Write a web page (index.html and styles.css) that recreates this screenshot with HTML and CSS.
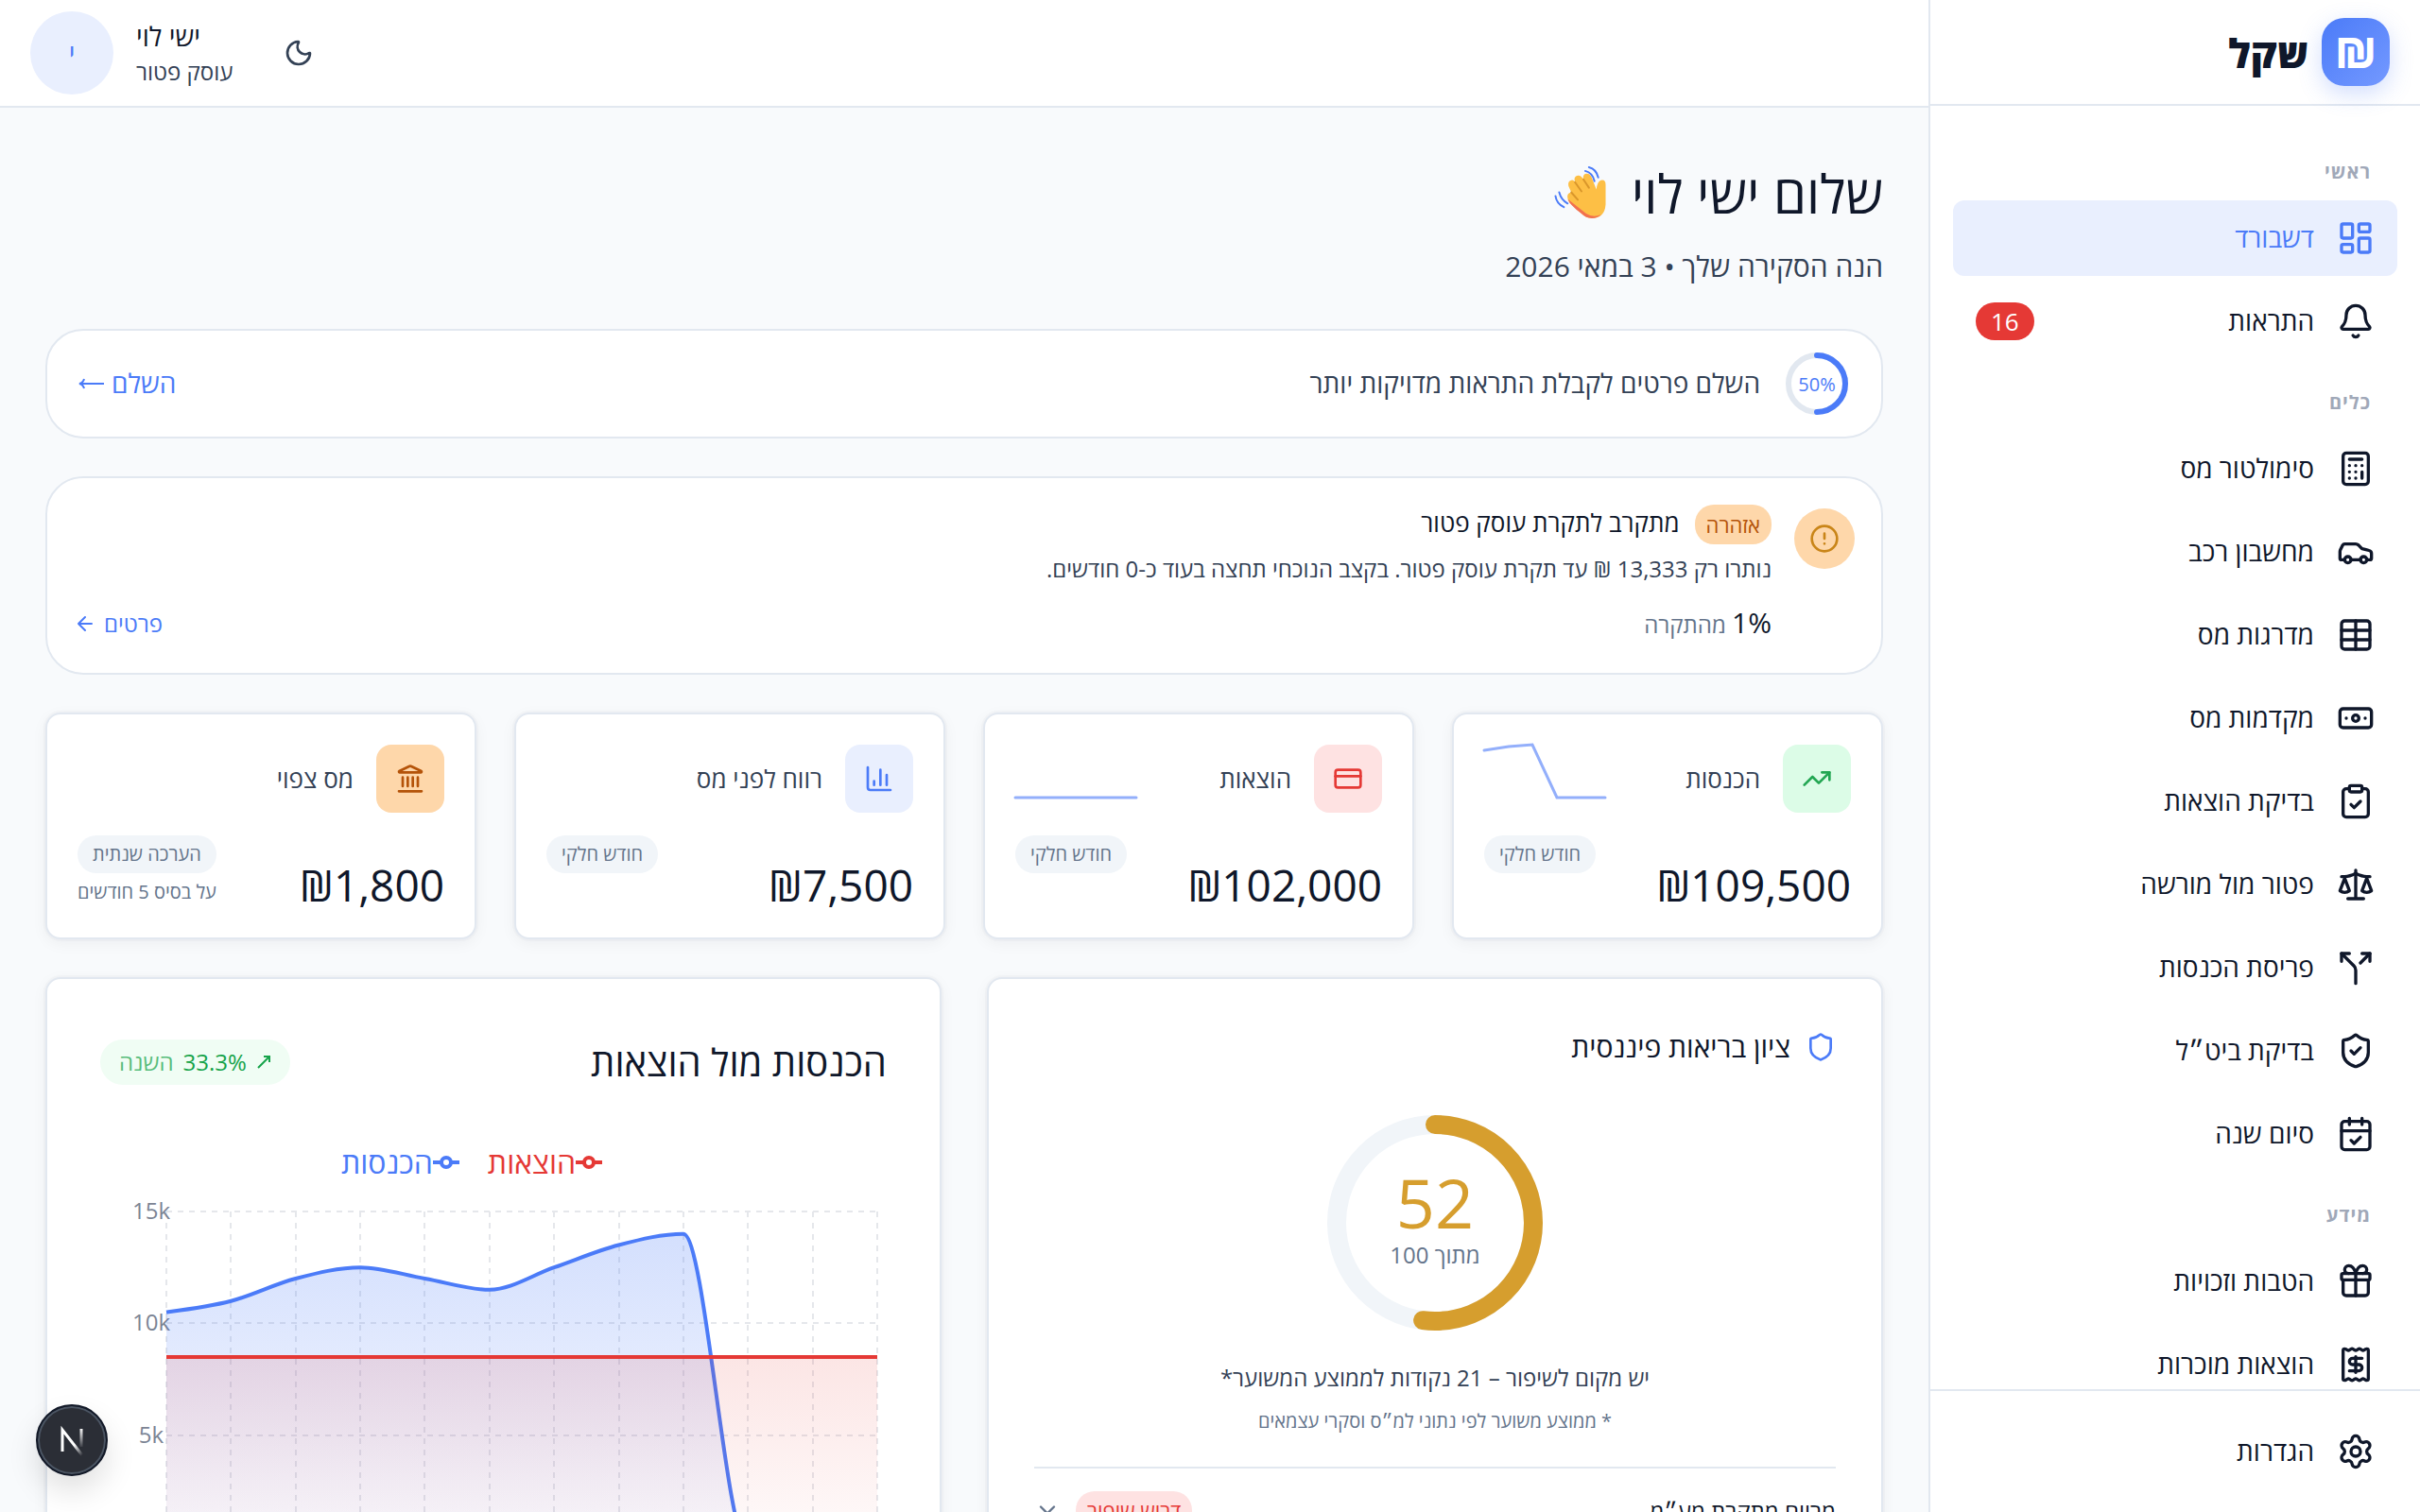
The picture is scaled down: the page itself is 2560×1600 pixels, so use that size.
FILE: index.html
```html
<!DOCTYPE html>
<html lang="he" dir="rtl">
<head>
  <meta charset="UTF-8">
  <meta name="viewport" content="width=device-width, initial-scale=1.0">
  <title>שקל - דשבורד</title>
  <link rel="stylesheet" href="styles.css">
</head>
<body>

  <aside class="sidebar">
    <div class="brand">
      <span class="brand-icon">₪</span>
      <span class="brand-name">שקל</span>
    </div>

    <nav class="nav">
      <h2 class="nav-title">ראשי</h2>
      <a href="#" class="nav-item active">
        <svg class="icon" viewBox="0 0 24 24"><rect x="3" y="3" width="7" height="9" rx="1"/><rect x="14" y="3" width="7" height="5" rx="1"/><rect x="14" y="12" width="7" height="9" rx="1"/><rect x="3" y="16" width="7" height="5" rx="1"/></svg>
        <span>דשבורד</span>
      </a>
      <a href="#" class="nav-item">
        <svg class="icon" viewBox="0 0 24 24"><path d="M10.268 21a2 2 0 0 0 3.464 0"/><path d="M3.262 15.326A1 1 0 0 0 4 17h16a1 1 0 0 0 .74-1.673C19.41 13.956 18 12.499 18 8A6 6 0 0 0 6 8c0 4.499-1.411 5.956-2.738 7.326"/></svg>
        <span>התראות</span>
        <span class="nav-count">16</span>
      </a>

      <h2 class="nav-title">כלים</h2>
      <a href="#" class="nav-item">
        <svg class="icon" viewBox="0 0 24 24"><rect x="4" y="2" width="16" height="20" rx="2"/><path d="M8 6h8M16 14v4M16 10h.01M12 10h.01M8 10h.01M12 14h.01M8 14h.01M12 18h.01M8 18h.01"/></svg>
        <span>סימולטור מס</span>
      </a>
      <a href="#" class="nav-item">
        <svg class="icon" viewBox="0 0 24 24"><path d="M19 17h2c.6 0 1-.4 1-1v-3c0-.9-.7-1.7-1.5-1.9C18.7 10.6 16 10 16 10s-1.3-1.4-2.2-2.3c-.5-.4-1.1-.7-1.8-.7H5c-.6 0-1.1.4-1.4.9l-1.4 2.9A3.7 3.7 0 0 0 2 12v4c0 .6.4 1 1 1h2"/><circle cx="7" cy="17" r="2"/><path d="M9 17h6"/><circle cx="17" cy="17" r="2"/></svg>
        <span>מחשבון רכב</span>
      </a>
      <a href="#" class="nav-item">
        <svg class="icon" viewBox="0 0 24 24"><path d="M12 3v18"/><rect x="3" y="3" width="18" height="18" rx="2"/><path d="M3 9h18M3 15h18"/></svg>
        <span>מדרגות מס</span>
      </a>
      <a href="#" class="nav-item">
        <svg class="icon" viewBox="0 0 24 24"><rect x="2" y="6" width="20" height="12" rx="2"/><circle cx="12" cy="12" r="2"/><path d="M6 12h.01M18 12h.01"/></svg>
        <span>מקדמות מס</span>
      </a>
      <a href="#" class="nav-item">
        <svg class="icon" viewBox="0 0 24 24"><rect x="8" y="2" width="8" height="4" rx="1"/><path d="M16 4h2a2 2 0 0 1 2 2v14a2 2 0 0 1-2 2H6a2 2 0 0 1-2-2V6a2 2 0 0 1 2-2h2"/><path d="m9 14 2 2 4-4"/></svg>
        <span>בדיקת הוצאות</span>
      </a>
      <a href="#" class="nav-item">
        <svg class="icon" viewBox="0 0 24 24"><path d="m16 16 3-8 3 8c-.87.65-1.92 1-3 1s-2.13-.35-3-1Z"/><path d="m2 16 3-8 3 8c-.87.65-1.92 1-3 1s-2.13-.35-3-1Z"/><path d="M7 21h10M12 3v18"/><path d="M3 7h2c2 0 5-1 7-2 2 1 5 2 7 2h2"/></svg>
        <span>פטור מול מורשה</span>
      </a>
      <a href="#" class="nav-item">
        <svg class="icon" viewBox="0 0 24 24"><path d="M16 3h5v5M8 3H3v5"/><path d="M12 22v-8.3a4 4 0 0 0-1.172-2.872L3 3"/><path d="m15 9 6-6"/></svg>
        <span>פריסת הכנסות</span>
      </a>
      <a href="#" class="nav-item">
        <svg class="icon" viewBox="0 0 24 24"><path d="M20 13c0 5-3.5 7.5-7.66 8.95a1 1 0 0 1-.67-.01C7.5 20.5 4 18 4 13V6a1 1 0 0 1 1-1c2 0 4.5-1.2 6.24-2.72a1.17 1.17 0 0 1 1.52 0C14.51 3.81 17 5 19 5a1 1 0 0 1 1 1z"/><path d="m9 12 2 2 4-4"/></svg>
        <span>בדיקת ביט״ל</span>
      </a>
      <a href="#" class="nav-item">
        <svg class="icon" viewBox="0 0 24 24"><path d="M8 2v4M16 2v4"/><rect x="3" y="4" width="18" height="18" rx="2"/><path d="M3 10h18"/><path d="m9 16 2 2 4-4"/></svg>
        <span>סיום שנה</span>
      </a>

      <h2 class="nav-title">מידע</h2>
      <a href="#" class="nav-item">
        <svg class="icon" viewBox="0 0 24 24"><path d="M12 7v14"/><path d="M20 11v8a2 2 0 0 1-2 2H6a2 2 0 0 1-2-2v-8"/><path d="M7.5 7a1 1 0 0 1 0-5A4.8 8 0 0 1 12 7a4.8 8 0 0 1 4.5-5 1 1 0 0 1 0 5"/><rect x="3" y="7" width="18" height="4" rx="1"/></svg>
        <span>הטבות וזכויות</span>
      </a>
      <a href="#" class="nav-item">
        <svg class="icon" viewBox="0 0 24 24"><path d="M4 3a1 1 0 0 1 1-1 1.3 1.3 0 0 1 .7.2l.933.6a1.3 1.3 0 0 0 1.4 0l.934-.6a1.3 1.3 0 0 1 1.4 0l.933.6a1.3 1.3 0 0 0 1.4 0l.933-.6a1.3 1.3 0 0 1 1.4 0l.934.6a1.3 1.3 0 0 0 1.4 0l.933-.6A1.3 1.3 0 0 1 19 2a1 1 0 0 1 1 1v18a1 1 0 0 1-1 1 1.3 1.3 0 0 1-.7-.2l-.933-.6a1.3 1.3 0 0 0-1.4 0l-.934.6a1.3 1.3 0 0 1-1.4 0l-.933-.6a1.3 1.3 0 0 0-1.4 0l-.933.6a1.3 1.3 0 0 1-1.4 0l-.934-.6a1.3 1.3 0 0 0-1.4 0l-.933.6a1.3 1.3 0 0 1-.7.2 1 1 0 0 1-1-1z"/><path d="M12 17V7"/><path d="M16 8h-6a2 2 0 0 0 0 4h4a2 2 0 0 1 0 4H8"/></svg>
        <span>הוצאות מוכרות</span>
      </a>
    </nav>

    <div class="sidebar-footer">
      <a href="#" class="nav-item">
        <svg class="icon" viewBox="0 0 24 24"><path d="M9.671 4.136a2.34 2.34 0 0 1 4.659 0 2.34 2.34 0 0 0 3.319 1.915 2.34 2.34 0 0 1 2.33 4.033 2.34 2.34 0 0 0 0 3.831 2.34 2.34 0 0 1-2.33 4.033 2.34 2.34 0 0 0-3.319 1.915 2.34 2.34 0 0 1-4.659 0 2.34 2.34 0 0 0-3.32-1.915 2.34 2.34 0 0 1-2.33-4.033 2.34 2.34 0 0 0 0-3.831A2.34 2.34 0 0 1 6.35 6.051a2.34 2.34 0 0 0 3.319-1.915"/><circle cx="12" cy="12" r="3"/></svg>
        <span>הגדרות</span>
      </a>
    </div>
  </aside>

  <div class="page">
    <header class="topbar">
      <button type="button" class="theme-btn" aria-label="מצב כהה">
        <svg class="icon icon-sm" viewBox="0 0 24 24"><path d="M20.985 12.486a9 9 0 1 1-9.473-9.472c.405-.022.617.46.402.803a6 6 0 0 0 8.268 8.268c.344-.215.825-.004.803.401"/></svg>
      </button>
      <div class="user">
        <span class="user-name">ישי לוי</span>
        <span class="user-type">עוסק פטור</span>
      </div>
      <span class="avatar">י</span>
    </header>

    <main class="content">
      <div class="welcome">
        <h1>
          שלום ישי לוי
          <svg class="wave" viewBox="0 0 56 57" role="img" aria-label="יד מנופפת">
            <path d="M14 34 Q13 29 18 28 L15 21 Q14 16 18 15 Q20 14 22 17 Q20 11 25 10 Q28 9 31 14 Q30 8 35 8 Q38 8 40 12 L45 25 Q46 16 50 15 Q55 14 55 20 V41 Q54 56 40 56 Q34 56 29 51 L16 39 Z" fill="#fdbf45"/>
            <path d="M14 35 Q16 41 29 51 Q34 56 40 56 Q46 56 50 52 Q42 56 34 51 Z" fill="#f2704f"/>
            <path d="M22 17 L29 27M31 14 L37 23M18 28 L25 36" fill="none" stroke="#d9962b" stroke-width="2" stroke-linecap="round"/>
            <path d="M37 1 Q45 3 47 12M33 5 Q41 7 43 16M1 32 Q2 40 10 44M5 28 Q7 36 14 40" fill="none" stroke="#4b7bf8" stroke-width="2" stroke-linecap="round"/>
          </svg>
        </h1>
        <p>הנה הסקירה שלך • 3 במאי 2026</p>
      </div>

      <section class="panel complete">
        <div class="complete-ring">
          <svg viewBox="0 0 72 72">
            <circle cx="36" cy="36" r="30" stroke="#e2e8f0"/>
            <circle cx="36" cy="36" r="30" stroke="#4b7bf8" pathLength="100" stroke-dasharray="50 100" stroke-linecap="round"/>
          </svg>
          <span dir="ltr">50%</span>
        </div>
        <p>השלם פרטים לקבלת התראות מדויקות יותר</p>
        <a href="#">השלם
          <svg class="long-arrow" viewBox="0 0 28 16"><path d="M28 9H2M7 4Q6 8 2 9Q6 10 7 14"/></svg>
        </a>
      </section>

      <section class="panel alert">
        <span class="alert-icon">
          <svg class="icon icon-sm" viewBox="0 0 24 24"><circle cx="12" cy="12" r="10"/><path d="M12 8v4M12 16h.01"/></svg>
        </span>
        <div class="alert-body">
          <div class="alert-head">
            <span class="alert-tag">אזהרה</span>
            <h3>מתקרב לתקרת עוסק פטור</h3>
          </div>
          <p>נותרו רק 13,333 ₪ עד תקרת עוסק פטור. בקצב הנוכחי תחצה בעוד כ-0 חודשים.</p>
          <div class="alert-foot">
            <span><b dir="ltr">1%</b> מהתקרה</span>
            <a href="#">פרטים
              <svg class="icon icon-xs" viewBox="0 0 24 24"><path d="m12 19-7-7 7-7M19 12H5"/></svg>
            </a>
          </div>
        </div>
      </section>

      <section class="stats">
        <article class="card stat">
          <div class="stat-top">
            <span class="stat-icon green">
              <svg class="icon icon-sm" viewBox="0 0 24 24"><path d="M16 7h6v6"/><path d="m22 7-8.5 8.5-5-5L2 17"/></svg>
            </span>
            <h3>הכנסות</h3>
            <svg class="spark" viewBox="0 0 128 56"><polyline points="0,6 26,2 51,0 77,56 102,56 128,56"/></svg>
          </div>
          <div class="stat-bottom">
            <strong dir="ltr">₪109,500</strong>
            <div class="stat-notes"><span class="tag">חודש חלקי</span></div>
          </div>
        </article>

        <article class="card stat">
          <div class="stat-top">
            <span class="stat-icon red">
              <svg class="icon icon-sm" viewBox="0 0 24 24"><rect x="2" y="5" width="20" height="14" rx="2"/><path d="M2 10h20"/></svg>
            </span>
            <h3>הוצאות</h3>
            <svg class="spark" viewBox="0 0 128 56"><polyline points="0,56 128,56"/></svg>
          </div>
          <div class="stat-bottom">
            <strong dir="ltr">₪102,000</strong>
            <div class="stat-notes"><span class="tag">חודש חלקי</span></div>
          </div>
        </article>

        <article class="card stat">
          <div class="stat-top">
            <span class="stat-icon blue">
              <svg class="icon icon-sm" viewBox="0 0 24 24"><path d="M3 3v16a2 2 0 0 0 2 2h16"/><path d="M18 17V9M13 17V5M8 17v-3"/></svg>
            </span>
            <h3>רווח לפני מס</h3>
          </div>
          <div class="stat-bottom">
            <strong dir="ltr">₪7,500</strong>
            <div class="stat-notes"><span class="tag">חודש חלקי</span></div>
          </div>
        </article>

        <article class="card stat">
          <div class="stat-top">
            <span class="stat-icon orange">
              <svg class="icon icon-sm" viewBox="0 0 24 24"><path d="M10 18v-7M14 18v-7M18 18v-7M6 18v-7M3 22h18"/><path d="M11.119 2.205a2 2 0 0 1 1.762 0l7.84 3.846A.5.5 0 0 1 20.5 7h-17a.5.5 0 0 1-.22-.949z"/></svg>
            </span>
            <h3>מס צפוי</h3>
          </div>
          <div class="stat-bottom">
            <strong dir="ltr">₪1,800</strong>
            <div class="stat-notes">
              <span class="tag">הערכה שנתית</span>
              <small>על בסיס 5 חודשים</small>
            </div>
          </div>
        </article>
      </section>

      <section class="widgets">
        <article class="card health">
          <h2>
            <svg class="icon icon-sm" viewBox="0 0 24 24"><path d="M20 13c0 5-3.5 7.5-7.66 8.95a1 1 0 0 1-.67-.01C7.5 20.5 4 18 4 13V6a1 1 0 0 1 1-1c2 0 4.5-1.2 6.24-2.72a1.17 1.17 0 0 1 1.52 0C14.51 3.81 17 5 19 5a1 1 0 0 1 1 1z"/></svg>
            ציון בריאות פיננסית
          </h2>
          <div class="score">
            <svg viewBox="0 0 228 228">
              <circle cx="114" cy="114" r="104" stroke="#f1f5f9"/>
              <circle cx="114" cy="114" r="104" stroke="#d69e2e" pathLength="100" stroke-dasharray="52 100" stroke-linecap="round"/>
            </svg>
            <div class="score-text">
              <strong>52</strong>
              <span>מתוך 100</span>
            </div>
          </div>
          <p class="health-msg">יש מקום לשיפור – 21 נקודות לממוצע המשוער*</p>
          <p class="health-note">* ממוצע משוער לפי נתוני למ״ס וסקרי עצמאים</p>
          <button type="button" class="health-row">
            <span class="health-label">מרווח מתקרת מע״מ</span>
            <span class="health-tag">דרוש שיפור</span>
            <svg class="icon" viewBox="0 0 24 24"><path d="m6 9 6 6 6-6"/></svg>
          </button>
        </article>

        <article class="card chart">
          <div class="chart-head">
            <h2>הכנסות מול הוצאות</h2>
            <span class="trend">
              <svg viewBox="0 0 16 16"><path d="M2 14 14 2M8 2h6v6"/></svg>
              <b dir="ltr">33.3%</b>
              <span>השנה</span>
            </span>
          </div>
          <div class="legend">
            <span class="legend-out"><svg viewBox="0 0 28 28"><path d="M0 14h9M19 14h9"/><circle cx="14" cy="14" r="5"/></svg>הוצאות</span>
            <span class="legend-in"><svg viewBox="0 0 28 28"><path d="M0 14h9M19 14h9"/><circle cx="14" cy="14" r="5"/></svg>הכנסות</span>
          </div>
          <svg class="plot" viewBox="0 0 832 440">
            <defs>
              <linearGradient id="fillIn" x1="0" y1="0" x2="0" y2="1">
                <stop offset="0" stop-color="#4b7bf8" stop-opacity="0.24"/>
                <stop offset="1" stop-color="#4b7bf8" stop-opacity="0.03"/>
              </linearGradient>
              <linearGradient id="fillOut" x1="0" y1="0" x2="0" y2="1">
                <stop offset="0" stop-color="#e53935" stop-opacity="0.13"/>
                <stop offset="1" stop-color="#e53935" stop-opacity="0.02"/>
              </linearGradient>
            </defs>
            <path class="grid" d="M70 20H822M70 138H822M70 257H822M70 375H822"/>
            <path class="grid" d="M70 20V375M138 20V375M207 20V375M275 20V375M343 20V375M412 20V375M480 20V375M549 20V375M617 20V375M685 20V375M754 20V375M822 20V375"/>
            <g class="ticks">
              <text x="54" y="28">15k</text>
              <text x="54" y="146">10k</text>
              <text x="54" y="265">5k</text>
            </g>
            <path fill="url(#fillIn)" d="M70 126.500C92.800 123.500 115.600 120.600 138.400 114.700S183.900 96.900 206.700 91S252.300 79.200 275.100 79.200S320.700 87.100 343.500 91S389 102.800 411.800 102.800S457.400 87.100 480.200 79.200S525.700 61.400 548.500 55.500S594.100 43.700 616.900 43.700C639.700 43.700 662.500 375 685.300 375H70Z"/>
            <path class="line-in" d="M70 126.500C92.800 123.500 115.600 120.600 138.400 114.700S183.900 96.900 206.700 91S252.300 79.200 275.100 79.200S320.700 87.100 343.500 91S389 102.800 411.800 102.800S457.400 87.100 480.200 79.200S525.700 61.400 548.500 55.500S594.100 43.700 616.900 43.700C639.700 43.700 662.500 375 685.300 375H822"/>
            <path fill="url(#fillOut)" d="M70 174H822V375H70Z"/>
            <path class="line-out" d="M70 174H822"/>
          </svg>
        </article>
      </section>
    </main>
  </div>

  <button type="button" class="dev-btn" aria-label="כלי פיתוח">
    <svg viewBox="0 0 28 30">
      <defs>
        <linearGradient id="devA" x1="0" y1="0" x2="1" y2="1">
          <stop offset="0.6" stop-color="#fff"/>
          <stop offset="1" stop-color="#fff" stop-opacity="0"/>
        </linearGradient>
        <linearGradient id="devB" gradientUnits="userSpaceOnUse" x1="0" y1="2" x2="0" y2="24">
          <stop offset="0" stop-color="#fff"/>
          <stop offset="1" stop-color="#fff" stop-opacity="0"/>
        </linearGradient>
      </defs>
      <path d="M4 27V4L25 31" stroke="url(#devA)"/>
      <path d="M24 3V22" stroke="url(#devB)"/>
    </svg>
  </button>

</body>
</html>
```
FILE: styles.css
```css
* {
  box-sizing: border-box;
  margin: 0;
  padding: 0;
}

body {
  display: flex;
  height: 100vh;
  overflow: hidden;
  font-family: "Open Sans", "Liberation Sans", sans-serif;
  font-size: 28px;
  color: #0f172a;
  background-color: #f8fafc;
}

h1, h2, h3, b, strong {
  font-weight: 400;
}

a {
  color: #4b7bf8;
  text-decoration: none;
}

button {
  font: inherit;
  color: inherit;
  border: none;
  background: none;
  cursor: pointer;
}

.icon {
  width: 40px;
  height: 40px;
  flex-shrink: 0;
  fill: none;
  stroke: currentColor;
  stroke-width: 2;
  stroke-linecap: round;
  stroke-linejoin: round;
}

.icon-sm {
  width: 32px;
  height: 32px;
}

.icon-xs {
  width: 24px;
  height: 24px;
}

/* sidebar */
.sidebar {
  display: flex;
  flex-direction: column;
  width: 520px;
  flex-shrink: 0;
  background-color: #fff;
  border-left: 2px solid #e2e8f0;
}

.brand {
  display: flex;
  align-items: center;
  gap: 14px;
  height: 112px;
  flex-shrink: 0;
  padding: 0 32px;
  border-bottom: 2px solid #e2e8f0;
}

.brand-icon {
  display: flex;
  align-items: center;
  justify-content: center;
  width: 72px;
  height: 72px;
  border-radius: 24px;
  background: linear-gradient(135deg, #4b7bf8, #7499ff);
  box-shadow: 0 8px 24px rgba(75, 123, 248, 0.25);
  color: #fff;
  font-size: 44px;
  line-height: 44px;
  font-weight: 800;
}

.brand-name {
  font-size: 42px;
  font-weight: 800;
}

.nav {
  flex: 1;
  min-height: 0;
  overflow: hidden;
  padding: 24px;
}

.nav-title {
  padding: 30px 28px 14px;
  font-size: 20px;
  line-height: 32px;
  font-weight: 700;
  letter-spacing: 1px;
  color: #a0a8b8;
}

.nav-item {
  display: flex;
  align-items: center;
  gap: 24px;
  height: 80px;
  margin-bottom: 8px;
  padding: 0 24px;
  border-radius: 12px;
  color: #0f172a;
}

.nav-item span {
  padding-bottom: 2px;
}

.nav-item:hover {
  background-color: #f1f5f9;
}

.nav-item.active {
  background-color: #e9effe;
  color: #4b7bf8;
}

.nav-item:has(+ .nav-title) {
  margin-bottom: 0;
}

.nav-item .nav-count {
  margin-right: auto;
  padding: 0 16px;
  border-radius: 20px;
  background-color: #e53935;
  color: #fff;
  font-size: 26px;
  font-weight: 500;
  line-height: 40px;
}

.sidebar-footer {
  padding: 24px 24px 16px;
  border-top: 2px solid #e2e8f0;
}

/* top bar */
.page {
  flex: 1;
  min-width: 0;
}

.topbar {
  display: flex;
  align-items: center;
  justify-content: flex-end;
  gap: 24px;
  padding: 12px 32px;
  background-color: #fff;
  border-bottom: 2px solid #e2e8f0;
}

.theme-btn {
  display: flex;
  padding: 16px 30px;
  color: #334155;
}

.user {
  display: flex;
  flex-direction: column;
  text-align: left;
}

.user-name {
  line-height: 40px;
}

.user-type {
  font-size: 24px;
  line-height: 36px;
  color: #334155;
}

.avatar {
  width: 88px;
  height: 88px;
  border-radius: 50%;
  background-color: #e9effe;
  color: #4b7bf8;
  line-height: 88px;
  text-align: center;
}

/* content */
.content {
  display: flex;
  flex-direction: column;
  gap: 40px;
  padding: 48px;
}

.welcome h1 {
  display: flex;
  align-items: center;
  gap: 26px;
  font-size: 56px;
  line-height: 84px;
}

.wave {
  width: 56px;
  height: 56px;
}

.welcome p {
  padding: 16px 0 6px;
  font-size: 30px;
  line-height: 40px;
  color: #334155;
}

.panel {
  display: flex;
  gap: 24px;
  background-color: #fff;
  border: 2px solid #e2e8f0;
  border-radius: 40px;
}

.complete {
  align-items: center;
  padding: 20px 32px;
  color: #334155;
}

.complete p,
.complete a {
  padding-bottom: 2px;
}

.complete-ring {
  display: grid;
  place-items: center;
  color: #4b7bf8;
  font-size: 20px;
}

.complete-ring svg,
.complete-ring span,
.score svg,
.score-text {
  grid-area: 1 / 1;
}

.complete-ring svg {
  width: 72px;
  height: 72px;
  fill: none;
  stroke-width: 6;
  transform: rotate(-90deg);
}

.complete a {
  display: flex;
  align-items: center;
  gap: 8px;
  margin-right: auto;
}

.long-arrow {
  width: 28px;
  height: 16px;
  fill: none;
  stroke: currentColor;
  stroke-width: 2;
}

.alert {
  padding: 28px;
}

.alert-icon {
  display: flex;
  align-items: center;
  justify-content: center;
  width: 64px;
  height: 64px;
  margin-top: 4px;
  border-radius: 50%;
  background-color: #fed7aa;
  color: #c98518;
}

.alert-body {
  flex: 1;
}

.alert-head {
  display: flex;
  align-items: center;
  gap: 16px;
}

.alert-tag {
  padding: 0 12px;
  border-radius: 20px;
  background-color: #fed7aa;
  color: #b45309;
  font-size: 22px;
  line-height: 42px;
}

.alert h3 {
  font-size: 26px;
  line-height: 36px;
  padding-bottom: 4px;
}

.alert p {
  margin-top: 6px;
  font-size: 24px;
  line-height: 40px;
  color: #334155;
}

.alert-foot {
  display: flex;
  align-items: center;
  justify-content: space-between;
  height: 48px;
  margin-top: 14px;
  font-size: 24px;
  line-height: 48px;
  color: #64748b;
}

.alert-foot b {
  font-size: 30px;
  color: #0f172a;
}

.alert-foot a {
  display: flex;
  align-items: center;
  gap: 8px;
}

.card {
  background-color: #fff;
  border: 2px solid #e2e8f0;
  border-radius: 16px;
  box-shadow: 0 0 0 2px rgba(15, 23, 42, 0.02), 0 4px 16px rgba(15, 23, 42, 0.05);
}

/* stat cards */
.stats {
  display: grid;
  grid-template-columns: repeat(4, 1fr);
  gap: 40px;
}

.stat {
  display: flex;
  flex-direction: column;
  gap: 24px;
  padding: 32px;
}

.stat-top {
  display: flex;
  align-items: center;
  gap: 24px;
}

.stat-top h3 {
  font-size: 26px;
  color: #334155;
}

.stat-icon {
  display: flex;
  align-items: center;
  justify-content: center;
  width: 72px;
  height: 72px;
  border-radius: 16px;
}

.green {
  background-color: #dcfce7;
  color: #22a652;
}

.red {
  background-color: #fee2e2;
  color: #e53935;
}

.blue {
  background-color: #e9effe;
  color: #4b7bf8;
}

.orange {
  background-color: #fed7aa;
  color: #b45309;
}

.spark {
  align-self: flex-start;
  width: 128px;
  height: 56px;
  margin-right: auto;
  overflow: visible;
  fill: none;
  stroke: #93affb;
  stroke-width: 3;
  stroke-linecap: round;
}

.stat-bottom {
  display: flex;
  flex: 1;
  justify-content: space-between;
}

.stat-bottom strong {
  align-self: flex-end;
  padding-bottom: 2px;
  font-size: 46px;
  line-height: 44px;
}

.stat-notes {
  display: flex;
  flex-direction: column;
  align-items: flex-end;
  gap: 4px;
}

.tag {
  padding: 0 16px;
  border-radius: 20px;
  background-color: #f1f5f9;
  color: #64748b;
  font-size: 20px;
  line-height: 40px;
}

.stat-notes small {
  font-size: 20px;
  line-height: 32px;
  color: #64748b;
}

/* widgets */
.widgets {
  display: grid;
  grid-template-columns: repeat(2, 1fr);
  gap: 48px;
}

.health {
  padding: 48px;
  text-align: center;
}

.health h2 {
  display: flex;
  align-items: center;
  gap: 16px;
  font-size: 30px;
  line-height: 48px;
}

.health h2 .icon {
  color: #4b7bf8;
}

.score {
  display: grid;
  place-items: center;
  margin: 48px 0 32px;
}

.score svg {
  width: 228px;
  height: 228px;
  fill: none;
  stroke-width: 20;
  transform: rotate(-90deg);
}

.score-text {
  display: flex;
  flex-direction: column;
  padding-bottom: 8px;
  color: #64748b;
  font-size: 24px;
  line-height: 36px;
}

.score-text strong {
  color: #d69e2e;
  font-size: 72px;
  line-height: 76px;
}

.health-msg {
  font-size: 24px;
  line-height: 36px;
  color: #334155;
}

.health-note {
  margin: 12px 0 32px;
  font-size: 20px;
  line-height: 32px;
  color: #64748b;
}

.health-row {
  display: flex;
  align-items: center;
  gap: 16px;
  width: 100%;
  padding-top: 24px;
  border-top: 2px solid #e2e8f0;
  font-size: 24px;
}

.health-tag {
  margin-right: auto;
  padding: 0 12px;
  border-radius: 20px;
  background-color: #fee2e2;
  color: #e53935;
  font-size: 22px;
  line-height: 40px;
}

.health-row .icon {
  width: 28px;
  height: 28px;
  color: #64748b;
}

.chart {
  padding: 56px;
}

.chart-head {
  display: flex;
  align-items: center;
  justify-content: space-between;
}

.chart-head h2 {
  font-size: 40px;
  line-height: 64px;
}

.trend {
  display: flex;
  align-items: center;
  gap: 10px;
  padding: 0 20px;
  border-radius: 24px;
  background-color: #f0fdf4;
  color: #16a34a;
  font-size: 24px;
  line-height: 48px;
}

.trend b {
  font-weight: 500;
}

.trend svg {
  width: 16px;
  height: 16px;
  fill: none;
  stroke: currentColor;
  stroke-width: 2;
}

.trend span {
  opacity: 0.7;
}

.legend {
  display: flex;
  justify-content: center;
  gap: 30px;
  margin: 52px 0 10px;
  padding-right: 46px;
  font-size: 32px;
  line-height: 44px;
}

.legend span {
  display: flex;
  align-items: center;
}

.legend svg {
  width: 28px;
  height: 28px;
  fill: none;
  stroke: currentColor;
  stroke-width: 4;
}

.legend-out {
  color: #e53935;
}

.legend-in {
  color: #4b7bf8;
}

.plot {
  display: block;
  width: 100%;
  direction: ltr;
}

.grid {
  fill: none;
  stroke: #e5e7eb;
  stroke-width: 2;
  stroke-dasharray: 6 6;
}

.ticks {
  fill: #7b8494;
  font-size: 24px;
  text-anchor: middle;
}

.line-in,
.line-out {
  fill: none;
  stroke: #4b7bf8;
  stroke-width: 4;
}

.line-out {
  stroke: #e53935;
}

.dev-btn {
  position: fixed;
  left: 38px;
  bottom: 38px;
  display: flex;
  align-items: center;
  justify-content: center;
  width: 76px;
  height: 76px;
  border: 2px solid #111827;
  border-radius: 50%;
  background-color: #2b2e36;
  box-shadow: inset 0 0 0 2px #4b5563, 0 16px 32px rgba(0, 0, 0, 0.12);
}

.dev-btn svg {
  width: 28px;
  height: 30px;
  fill: none;
  stroke-width: 3;
  overflow: visible;
}
```
